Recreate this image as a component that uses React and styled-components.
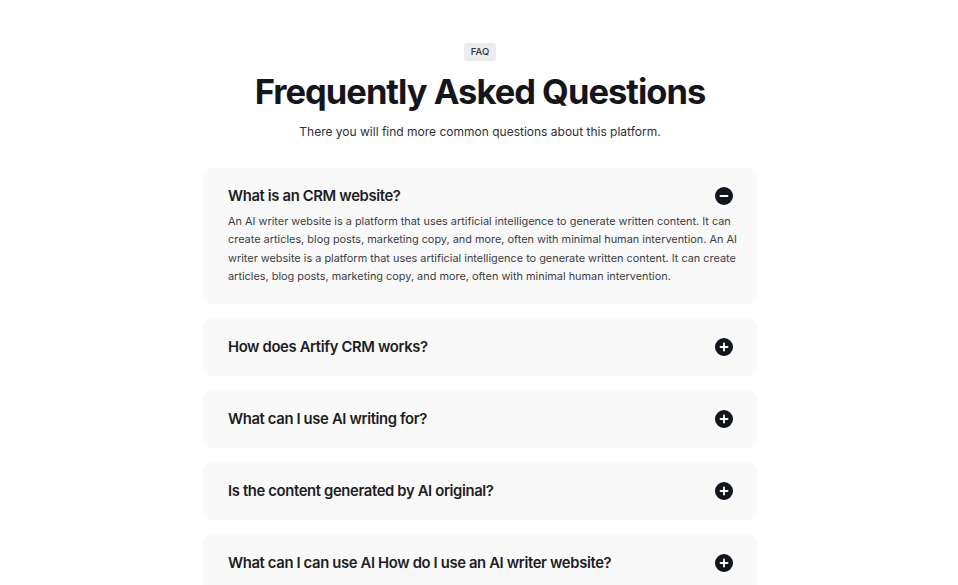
import { useState } from 'react';
import styled, { createGlobalStyle } from 'styled-components';

const GlobalStyle = createGlobalStyle`
  * { box-sizing: border-box; }
  body {
    margin: 0;
    background: #fff;
    font-family: Inter, "Noto Sans", sans-serif;
    color: #17181c;
  }
`;

const faqs = [
  {
    q: 'What is an CRM website?',
    a: 'An AI writer website is a platform that uses artificial intelligence to generate written content. It can create articles, blog posts, marketing copy, and more, often with minimal human intervention. An AI writer website is a platform that uses artificial intelligence to generate written content. It can create articles, blog posts, marketing copy, and more, often with minimal human intervention.',
  },
  { q: 'How does Artify CRM works?', a: '' },
  { q: 'What can I use AI writing for?', a: '' },
  { q: 'Is the content generated by AI original?', a: '' },
  { q: 'What can I can use AI How do I use an AI writer website?', a: '' },
];

const ToggleIcon = ({ open }) => (
  <svg width="18" height="18" viewBox="0 0 18 18">
    <circle cx="9" cy="9" r="9" fill="#14161f" />
    <path d={open ? 'M5.5 9h7' : 'M5.5 9h7M9 5.5v7'} stroke="#fff" strokeWidth="1.8" strokeLinecap="round" />
  </svg>
);

const App = () => {
  const [open, setOpen] = useState(0);

  return (
    <>
      <GlobalStyle />
      <Page>
        <Badge>FAQ</Badge>
        <Title>Frequently Asked Questions</Title>
        <Subtitle>There you will find more common questions about this platform.</Subtitle>
        <List>
          {faqs.map((item, i) => {
            const isOpen = open === i && item.a;
            return (
              <Card key={item.q} $open={isOpen}>
                <Question onClick={() => setOpen(open === i ? -1 : i)}>
                  <span>{item.q}</span>
                  <ToggleIcon open={isOpen} />
                </Question>
                {isOpen && <Answer>{item.a}</Answer>}
              </Card>
            );
          })}
        </List>
      </Page>
    </>
  );
};

const Page = styled.main`
  display: flex;
  flex-direction: column;
  align-items: center;
  padding: 43px 0 40px 2px;
`;

const Badge = styled.span`
  background: #ececec;
  border-radius: 3px;
  padding: 0 7px;
  height: 18px;
  line-height: 18px;
  font-size: 9.5px;
  font-weight: 500;
  color: #33353b;
`;

const Title = styled.h1`
  margin: 9px 0 0;
  font-size: 34.5px;
  line-height: 43px;
  font-weight: 700;
  letter-spacing: -1px;
  color: #15161c;
`;

const Subtitle = styled.p`
  margin: 10px 0 0;
  font-size: 12px;
  line-height: 18px;
  color: #2f3036;
`;

const List = styled.div`
  width: 554px;
  margin-top: 27px;
  display: flex;
  flex-direction: column;
  gap: 15px;
`;

const Card = styled.div`
  background: #f9f9f9;
  border-radius: 8px;
  padding: 18px 24px ${(p) => (p.$open ? '19px' : '19px')} 25px;
  min-height: 57px;
`;

const Question = styled.div`
  display: flex;
  align-items: center;
  justify-content: space-between;
  height: 20px;
  cursor: pointer;
  font-size: 14.8px;
  font-weight: 600;
  letter-spacing: -0.35px;
  color: #1d1e24;
`;

const Answer = styled.p`
  margin: 6px -4px 0 0;
  font-size: 10.9px;
  line-height: 18.3px;
  color: #3c3d43;
`;

export default App;
